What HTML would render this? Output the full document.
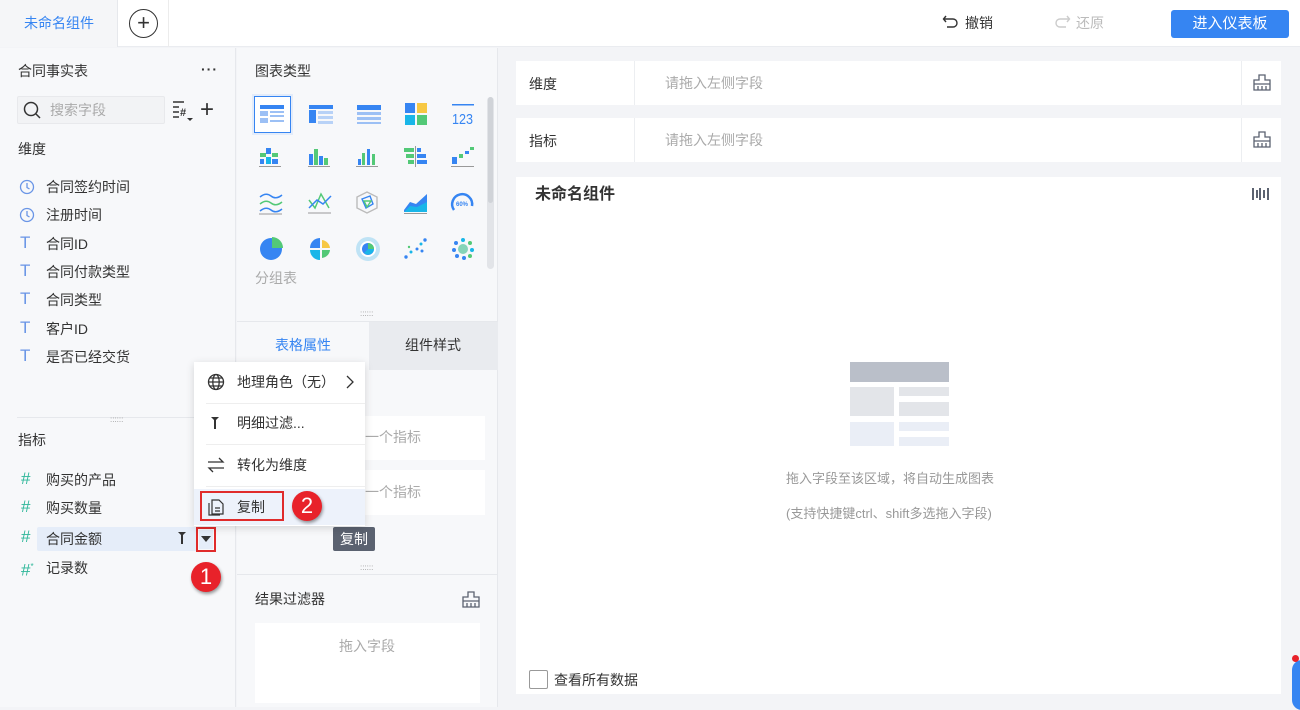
<!DOCTYPE html>
<html><head><meta charset="utf-8"><style>
*{margin:0;padding:0;box-sizing:border-box}
body{width:1300px;height:707px;overflow:hidden;position:relative;background:#f3f4f7;font-family:"Liberation Sans","Noto Sans CJK SC",sans-serif;font-size:14px;color:#333}
.a{position:absolute}
.t{white-space:nowrap;line-height:18px}
.gray{color:#999}
</style></head><body>
<!-- top bar -->
<div class="a" style="left:0;top:0;width:1300px;height:47px;background:#fff;border-bottom:1px solid #eaecf0"></div>
<div class="a" style="left:0;top:0;width:118px;height:47px;background:#f5f6f8;border-right:1px solid #e6e8ec"></div>
<div class="a t" style="left:24px;top:14px;color:#3685f2;font-size:14px">未命名组件</div>
<div class="a" style="left:168px;top:0;width:1px;height:47px;background:#ececec"></div>
<div class="a" style="left:129px;top:9px;width:29px;height:29px;border:1px solid #333;border-radius:50%;text-align:center;line-height:25px;font-size:22px;color:#333">+</div>
<svg class="a" style="left:942px;top:13px" width="18" height="18" viewBox="0 0 18 18"><path d="M4 3 L1.5 6 L4 9 M2 6 H11 a4 4 0 0 1 0 8 H5" fill="none" stroke="#333" stroke-width="1.4"/></svg>
<div class="a t" style="left:965px;top:14px;color:#333">撤销</div>
<svg class="a" style="left:1053px;top:13px" width="18" height="18" viewBox="0 0 18 18"><path d="M14 3 L16.5 6 L14 9 M16 6 H7 a4 4 0 0 0 0 8 H13" fill="none" stroke="#ccc" stroke-width="1.4"/></svg>
<div class="a t" style="left:1076px;top:14px;color:#bbb">还原</div>
<div class="a t" style="left:1171px;top:10px;width:118px;height:28px;background:#3685f2;border-radius:3px;color:#fff;text-align:center;line-height:28px;font-size:15px">进入仪表板</div>

<!-- left panel -->
<div class="a" style="left:0;top:48px;width:236px;height:659px;background:#f7f8fa;border-right:1px solid #e6e8ec"></div>
<div class="a t" style="left:18px;top:62px">合同事实表</div>
<div class="a t" style="left:201px;top:60px;font-size:14px;font-weight:bold;letter-spacing:1px">···</div>
<div class="a" style="left:17px;top:96px;width:148px;height:28px;background:#f2f3f5;border:1px solid #e8e9ec;border-radius:2px"></div>
<svg class="a" style="left:23px;top:101px" width="18" height="18" viewBox="0 0 18 18"><circle cx="8" cy="8" r="6.5" fill="none" stroke="#333" stroke-width="1.5"/><path d="M13 13 L17 17" stroke="#333" stroke-width="1.5"/></svg>
<div class="a t gray" style="left:50px;top:101px;color:#aaa">搜索字段</div>
<svg class="a" style="left:172px;top:100px" width="26" height="22" viewBox="0 0 26 22"><path d="M1 2H12M1 7H7M1 12H7M1 17H7" stroke="#333" stroke-width="1.4"/><text x="8" y="16" font-size="11" font-family="Liberation Sans" fill="#333" font-weight="bold">#</text><path d="M15 18 L21 18 L18 21Z" fill="#333"/></svg>
<div class="a t" style="left:200px;top:98px;font-size:24px;line-height:24px;font-weight:300;color:#333">+</div>
<div class="a t" style="left:18px;top:140px">维度</div>
<svg class="a" style="left:19px;top:179px" width="16" height="16" viewBox="0 0 16 16"><circle cx="8" cy="8" r="6.5" fill="none" stroke="#6a95e6" stroke-width="1.3"/><path d="M8 4V8.5L10.5 10" fill="none" stroke="#6a95e6" stroke-width="1.3"/></svg>
<div class="a t" style="left:46px;top:178px">合同签约时间</div>
<svg class="a" style="left:19px;top:207px" width="16" height="16" viewBox="0 0 16 16"><circle cx="8" cy="8" r="6.5" fill="none" stroke="#6a95e6" stroke-width="1.3"/><path d="M8 4V8.5L10.5 10" fill="none" stroke="#6a95e6" stroke-width="1.3"/></svg>
<div class="a t" style="left:46px;top:206px">注册时间</div>
<div class="a t" style="left:20px;top:234px;color:#6a95e6;font-size:17px">T</div><div class="a t" style="left:46px;top:235px">合同ID</div>
<div class="a t" style="left:20px;top:262px;color:#6a95e6;font-size:17px">T</div><div class="a t" style="left:46px;top:263px">合同付款类型</div>
<div class="a t" style="left:20px;top:290px;color:#6a95e6;font-size:17px">T</div><div class="a t" style="left:46px;top:291px">合同类型</div>
<div class="a t" style="left:20px;top:319px;color:#6a95e6;font-size:17px">T</div><div class="a t" style="left:46px;top:320px">客户ID</div>
<div class="a t" style="left:20px;top:347px;color:#6a95e6;font-size:17px">T</div><div class="a t" style="left:46px;top:348px">是否已经交货</div>
<div class="a" style="left:17px;top:417px;width:219px;height:1px;background:#e6e8ec"></div>
<div class="a t" style="left:110px;top:416px;font-size:8px;line-height:8px;color:#999">::::::</div>
<div class="a t" style="left:18px;top:431px">指标</div>
<div class="a t" style="left:21px;top:470px;color:#2fb79a;font-size:17px">#</div><div class="a t" style="left:46px;top:471px">购买的产品</div>
<div class="a t" style="left:21px;top:498px;color:#2fb79a;font-size:17px">#</div><div class="a t" style="left:46px;top:499px">购买数量</div>
<div class="a" style="left:37px;top:527px;width:160px;height:24px;background:#e5edf9;border-radius:2px"></div>
<div class="a t" style="left:21px;top:528px;color:#2fb79a;font-size:17px">#</div><div class="a t" style="left:46px;top:530px">合同金额</div>
<svg class="a" style="left:177px;top:531px" width="10" height="14" viewBox="0 0 10 14"><path d="M1 1H9L6 4V13H4V4Z" fill="#333"/></svg>
<div class="a" style="left:196px;top:527px;width:20px;height:25px;border:2px solid #e02b2b"></div>
<div class="a" style="left:199px;top:530px;width:14px;height:19px;background:#e5edf9"></div>
<svg class="a" style="left:200px;top:535px" width="12" height="8" viewBox="0 0 12 8"><path d="M1 1H11L6 7Z" fill="#333"/></svg>
<div class="a t" style="left:21px;top:558px;color:#2fb79a;font-size:17px">#<sup style="font-size:8px">*</sup></div><div class="a t" style="left:46px;top:559px">记录数</div>
<div class="a" style="left:191px;top:562px;width:30px;height:30px;border-radius:50%;background:#e8222a;box-shadow:1px 2px 3px rgba(0,0,0,.4);color:#fff;text-align:center;line-height:30px;font-size:22px">1</div>

<!-- middle panel -->
<div class="a" style="left:237px;top:48px;width:261px;height:659px;background:#f7f8fa;border-right:1px solid #e6e8ec"></div>
<div class="a t" style="left:255px;top:62px">图表类型</div>
<div class="a" style="left:487px;top:97px;width:7px;height:172px;background:#e2e4e8;border-radius:4px"></div>
<div class="a" style="left:488px;top:97px;width:5px;height:106px;background:#d0d3d8;border-radius:3px"></div>
<div class="a" style="left:254px;top:96px;width:37px;height:37px;border:1px solid #3685f2;background:#fff;box-shadow:0 0 0 2px #e3ecfa"></div>
<svg class="a" style="left:258px;top:100px" width="230" height="170" viewBox="0 0 230 170">
<g><rect x="2" y="5" width="24" height="4" fill="#3685f2"/><rect x="2" y="11" width="8" height="5" fill="#9cc0f5"/><rect x="12" y="11" width="14" height="2" fill="#9cc0f5"/><rect x="12" y="15" width="14" height="2" fill="#9cc0f5"/><rect x="2" y="18" width="8" height="5" fill="#9cc0f5"/><rect x="12" y="20" width="14" height="2" fill="#9cc0f5"/></g>
<g transform="translate(49,0)"><rect x="2" y="5" width="24" height="4" fill="#3685f2"/><rect x="2" y="10" width="7" height="13" fill="#3685f2"/><rect x="11" y="11" width="15" height="3" fill="#b8d2f7"/><rect x="11" y="16" width="15" height="3" fill="#b8d2f7"/><rect x="11" y="21" width="15" height="3" fill="#b8d2f7"/></g>
<g transform="translate(97,0)"><rect x="2" y="5" width="24" height="5" fill="#3685f2"/><rect x="2" y="12" width="24" height="3" fill="#9cc0f5"/><rect x="2" y="17" width="24" height="3" fill="#9cc0f5"/><rect x="2" y="22" width="24" height="2" fill="#9cc0f5"/></g>
<g transform="translate(145,0)"><rect x="2" y="3" width="10" height="10" fill="#3685f2"/><rect x="14" y="3" width="10" height="10" fill="#f7c843"/><rect x="2" y="15" width="10" height="10" fill="#19b6e8"/><rect x="14" y="15" width="10" height="10" fill="#53c977"/></g>
<g transform="translate(192,0)"><rect x="2" y="4" width="22" height="1.5" fill="#3685f2"/><text x="2" y="24" font-size="15" font-family="Liberation Sans Narrow,Liberation Sans" fill="#3685f2" textLength="21" lengthAdjust="spacingAndGlyphs">123</text></g>
<g transform="translate(0,45)"><rect x="8" y="3" width="5" height="6" fill="#3685f2"/><rect x="2" y="8" width="6" height="4" fill="#53c977"/><rect x="14" y="8" width="6" height="4" fill="#53c977"/><rect x="2" y="14" width="4" height="5" fill="#3685f2"/><rect x="8" y="12" width="5" height="7" fill="#19b6e8"/><rect x="14" y="14" width="6" height="5" fill="#3685f2"/><rect x="1" y="21" width="22" height="1" fill="#999"/></g>
<g transform="translate(49,45)"><rect x="2" y="9" width="4" height="11" fill="#3685f2"/><rect x="7" y="4" width="4" height="16" fill="#53c977"/><rect x="12" y="11" width="4" height="9" fill="#3685f2"/><rect x="17" y="13" width="4" height="7" fill="#53c977"/><rect x="1" y="21" width="22" height="1" fill="#999"/></g>
<g transform="translate(97,45)"><rect x="3" y="14" width="3" height="6" fill="#3685f2"/><rect x="7" y="8" width="3" height="12" fill="#53c977"/><rect x="12" y="4" width="3" height="16" fill="#3685f2"/><rect x="17" y="9" width="3" height="11" fill="#53c977"/><rect x="1" y="21" width="22" height="1" fill="#999"/></g>
<g transform="translate(145,45)"><rect x="1" y="3" width="10" height="4" fill="#53c977"/><rect x="14" y="3" width="4" height="4" fill="#3685f2"/><rect x="3" y="9" width="8" height="4" fill="#53c977"/><rect x="14" y="9" width="9" height="4" fill="#3685f2"/><rect x="5" y="15" width="6" height="4" fill="#53c977"/><rect x="14" y="15" width="10" height="4" fill="#3685f2"/><rect x="12" y="1" width="1" height="21" fill="#999"/></g>
<g transform="translate(192,45)"><rect x="2" y="12" width="5" height="7" fill="#3685f2"/><rect x="9" y="9" width="4" height="4" fill="#53c977"/><rect x="15" y="6" width="4" height="3" fill="#3685f2"/><rect x="20" y="2" width="4" height="3" fill="#53c977"/><rect x="1" y="21" width="23" height="1" fill="#999"/></g>
<g transform="translate(0,90)" fill="none" stroke-width="1.5"><path d="M2 7 Q8 2 13 6 T24 5" stroke="#3685f2"/><path d="M2 14 Q8 9 13 13 T24 12" stroke="#53c977"/><path d="M2 21 Q8 16 13 20 T24 19" stroke="#3685f2"/><path d="M1 24 H24" stroke="#999" stroke-width="1"/></g>
<g transform="translate(49,90)" fill="none" stroke-width="1.5"><path d="M2 10 L8 18 L14 4 L22 18" stroke="#53c977"/><path d="M2 18 L10 10 L16 14 L24 6" stroke="#3685f2"/><path d="M1 23 H24" stroke="#999" stroke-width="1"/></g>
<g transform="translate(97,90)" fill="none" stroke-width="1.4"><path d="M12 2 L22 7 L22 18 L12 23 L2 18 L2 7Z" stroke="#bbb"/><path d="M7 9 L15 6 L18 14 L11 18Z" stroke="#3685f2"/><path d="M9 11 L16 11 L12 17Z" stroke="#53c977"/></g>
<g transform="translate(145,90)"><path d="M1 20 L7 12 L13 14 L24 4 L24 18 L1 22Z" fill="#3685f2"/><path d="M1 22 L7 16 L14 17 L24 12 L24 22Z" fill="#19b6e8"/><rect x="1" y="23" width="23" height="1" fill="#999"/></g>
<g transform="translate(192,90)" fill="none"><path d="M4 20 A10 10 0 1 1 22 16" stroke="#3685f2" stroke-width="2.5"/><text x="6" y="16" font-size="6" font-family="Liberation Sans" fill="#3685f2" font-weight="bold">60%</text></g>
<g transform="translate(0,135)"><circle cx="13" cy="14" r="11" fill="#3685f2"/><path d="M14 2 A11 11 0 0 1 25 13 L14 13Z" fill="#53c977"/></g>
<g transform="translate(49,135)"><path d="M13 3 A10 10 0 0 0 3 13 L13 13Z" fill="#3685f2"/><path d="M15 5 A9 9 0 0 1 23 13 L15 13Z" fill="#f7c843"/><path d="M15 15 L23 15 A9 9 0 0 1 15 23Z" fill="#53c977"/><path d="M13 15 L13 25 A10 10 0 0 1 3 15Z" fill="#19b6e8"/></g>
<g transform="translate(97,135)"><circle cx="13" cy="14" r="12" fill="#bfe3f5"/><circle cx="13" cy="14" r="8" fill="#fff"/><circle cx="13" cy="14" r="6" fill="#3685f2"/><path d="M13 14 L13 8 A6 6 0 0 1 19 14Z" fill="#53c977"/><path d="M13 14 L19 14 A6 6 0 0 1 9 18Z" fill="#19b6e8"/></g>
<g transform="translate(145,135)" fill="#3685f2"><circle cx="3" cy="22" r="1.7"/><circle cx="8" cy="17" r="1.5" fill="#19b6e8"/><circle cx="14" cy="14" r="1.5"/><circle cx="18" cy="9" r="1.5" fill="#19b6e8"/><circle cx="22" cy="5" r="1.7"/><circle cx="6" cy="12" r="1.2" fill="#53c977"/><circle cx="19" cy="16" r="1.5"/></g>
<g transform="translate(192,135)"><circle cx="13" cy="14" r="5" fill="#86d4b8"/><circle cx="6" cy="8" r="2" fill="#3685f2"/><circle cx="13" cy="5" r="2" fill="#19b6e8"/><circle cx="20" cy="8" r="2" fill="#53c977"/><circle cx="4" cy="15" r="2" fill="#3685f2"/><circle cx="22" cy="15" r="2" fill="#19b6e8"/><circle cx="7" cy="21" r="2" fill="#3685f2"/><circle cx="14" cy="23" r="2" fill="#3685f2"/><circle cx="20" cy="21" r="2" fill="#53c977"/></g>
</svg>
<div class="a t" style="left:255px;top:269px;color:#aaa">分组表</div>
<div class="a t" style="left:360px;top:310px;font-size:8px;line-height:8px;color:#999">::::::</div>
<div class="a" style="left:237px;top:321px;width:261px;height:1px;background:#e6e8ec"></div>
<div class="a" style="left:369px;top:322px;width:129px;height:48px;background:#e9ebef"></div>
<div class="a t" style="left:275px;top:336px;color:#3685f2">表格属性</div>
<div class="a t" style="left:405px;top:336px;color:#333">组件样式</div>
<div class="a" style="left:255px;top:416px;width:230px;height:44px;background:#fff"></div>
<div class="a t" style="left:365px;top:428px;color:#aaa">一个指标</div>
<div class="a" style="left:255px;top:470px;width:230px;height:45px;background:#fff"></div>
<div class="a t" style="left:365px;top:483px;color:#aaa">一个指标</div>
<div class="a t" style="left:333px;top:527px;width:42px;height:24px;background:#5b6270;border-radius:2px;color:#fff;text-align:center;line-height:24px;font-size:14px">复制</div>
<div class="a t" style="left:360px;top:564px;font-size:8px;line-height:8px;color:#999">::::::</div>
<div class="a" style="left:237px;top:574px;width:261px;height:1px;background:#e6e8ec"></div>
<div class="a t" style="left:255px;top:590px">结果过滤器</div>
<svg class="a" style="left:461px;top:590px" width="20" height="20" viewBox="0 0 20 20" fill="none" stroke="#5b6270" stroke-width="1.3"><path d="M7 2H13V7H18V17H2V7H7Z M2 11H18 M6 13V17 M10 13V17 M14 13V17"/></svg>
<div class="a" style="left:255px;top:623px;width:225px;height:80px;background:#fff"></div>
<div class="a t" style="left:339px;top:637px;color:#aaa">拖入字段</div>

<!-- popup -->
<div class="a" style="left:194px;top:362px;width:171px;height:164px;background:#fff;box-shadow:0 2px 8px rgba(0,0,0,.15)"></div>
<div class="a" style="left:206px;top:403px;width:159px;height:1px;background:#eee"></div>
<div class="a" style="left:206px;top:444px;width:159px;height:1px;background:#eee"></div>
<div class="a" style="left:206px;top:486px;width:159px;height:1px;background:#eee"></div>
<div class="a" style="left:194px;top:489px;width:171px;height:36px;background:#edf2fb"></div>
<svg class="a" style="left:207px;top:373px" width="18" height="18" viewBox="0 0 18 18" fill="none" stroke="#333" stroke-width="1.3"><circle cx="9" cy="9" r="7.5"/><ellipse cx="9" cy="9" rx="3.2" ry="7.5"/><path d="M1.5 9H16.5M3 5H15M3 13H15"/></svg>
<div class="a t" style="left:237px;top:373px">地理角色（无）</div>
<svg class="a" style="left:345px;top:374px" width="10" height="16" viewBox="0 0 10 16"><path d="M2 2L8 8L2 14" fill="none" stroke="#333" stroke-width="1.3"/></svg>
<svg class="a" style="left:210px;top:416px" width="10" height="14" viewBox="0 0 10 14"><path d="M1 1H9L6 4V13H4V4Z" fill="#333"/></svg>
<div class="a t" style="left:237px;top:414px">明细过滤...</div>
<svg class="a" style="left:207px;top:456px" width="18" height="18" viewBox="0 0 18 18" fill="none" stroke="#333" stroke-width="1.3"><path d="M1 6H16L12 2M17 12H2L6 16"/></svg>
<div class="a t" style="left:237px;top:456px">转化为维度</div>
<svg class="a" style="left:207px;top:498px" width="18" height="18" viewBox="0 0 18 18" fill="none" stroke="#333" stroke-width="1.2"><path d="M5 2H12L16 6V16H5Z M2 5V17H13 M8 10H13 M8 13H13"/></svg>
<div class="a t" style="left:237px;top:498px">复制</div>
<div class="a" style="left:200px;top:491px;width:84px;height:30px;border:2px solid #e02b2b"></div>
<div class="a" style="left:292px;top:491px;width:30px;height:30px;border-radius:50%;background:#e8222a;box-shadow:1px 2px 3px rgba(0,0,0,.4);color:#fff;text-align:center;line-height:30px;font-size:22px">2</div>

<!-- right -->
<div class="a" style="left:516px;top:61px;width:765px;height:44px;background:#fff"></div>
<div class="a" style="left:634px;top:61px;width:1px;height:44px;background:#eceef1"></div>
<div class="a" style="left:1241px;top:61px;width:1px;height:44px;background:#eceef1"></div>
<div class="a t" style="left:529px;top:75px">维度</div>
<div class="a t" style="left:665px;top:74px;color:#aaa">请拖入左侧字段</div>
<svg class="a" style="left:1252px;top:73px" width="20" height="20" viewBox="0 0 20 20" fill="none" stroke="#5b6270" stroke-width="1.3"><path d="M7 2H13V7H18V17H2V7H7Z M2 11H18 M6 13V17 M10 13V17 M14 13V17"/></svg>
<div class="a" style="left:516px;top:118px;width:765px;height:44px;background:#fff"></div>
<div class="a" style="left:634px;top:118px;width:1px;height:44px;background:#eceef1"></div>
<div class="a" style="left:1241px;top:118px;width:1px;height:44px;background:#eceef1"></div>
<div class="a t" style="left:529px;top:132px">指标</div>
<div class="a t" style="left:665px;top:131px;color:#aaa">请拖入左侧字段</div>
<svg class="a" style="left:1252px;top:130px" width="20" height="20" viewBox="0 0 20 20" fill="none" stroke="#5b6270" stroke-width="1.3"><path d="M7 2H13V7H18V17H2V7H7Z M2 11H18 M6 13V17 M10 13V17 M14 13V17"/></svg>
<div class="a" style="left:516px;top:177px;width:765px;height:517px;background:#fff"></div>
<div class="a t" style="left:535px;top:186px;font-size:16px;font-weight:bold;color:#333">未命名组件</div>
<svg class="a" style="left:1251px;top:187px" width="19" height="14" viewBox="0 0 19 14" fill="#5b6270"><rect x="1" y="1" width="2" height="12"/><rect x="5" y="3" width="2" height="8"/><rect x="8" y="1" width="2" height="12"/><rect x="12" y="3" width="2" height="8"/><rect x="16" y="1" width="2" height="12"/></svg>
<div class="a" style="left:850px;top:362px;width:99px;height:20px;background:#babfc9"></div>
<div class="a" style="left:850px;top:387px;width:44px;height:29px;background:#e3e5e9"></div>
<div class="a" style="left:899px;top:387px;width:50px;height:9px;background:#e3e5e9"></div>
<div class="a" style="left:899px;top:402px;width:50px;height:14px;background:#e3e5e9"></div>
<div class="a" style="left:850px;top:422px;width:44px;height:24px;background:#eaeef6"></div>
<div class="a" style="left:899px;top:422px;width:50px;height:9px;background:#eaeef6"></div>
<div class="a" style="left:899px;top:437px;width:50px;height:9px;background:#eaeef6"></div>
<div class="a t" style="left:786px;top:470px;color:#999;font-size:13px">拖入字段至该区域，将自动生成图表</div>
<div class="a t" style="left:786px;top:505px;color:#999;font-size:13px">(支持快捷键ctrl、shift多选拖入字段)</div>
<div class="a" style="left:529px;top:670px;width:19px;height:19px;border:1px solid #999;border-radius:2px;background:#fff"></div>
<div class="a t" style="left:554px;top:671px">查看所有数据</div>
<div class="a" style="left:1292px;top:660px;width:14px;height:50px;background:#3685f2;border-radius:10px 0 0 10px"></div>
<div class="a" style="left:1292px;top:655px;width:7px;height:7px;background:#e8222a;border-radius:50%"></div>
</body></html>
